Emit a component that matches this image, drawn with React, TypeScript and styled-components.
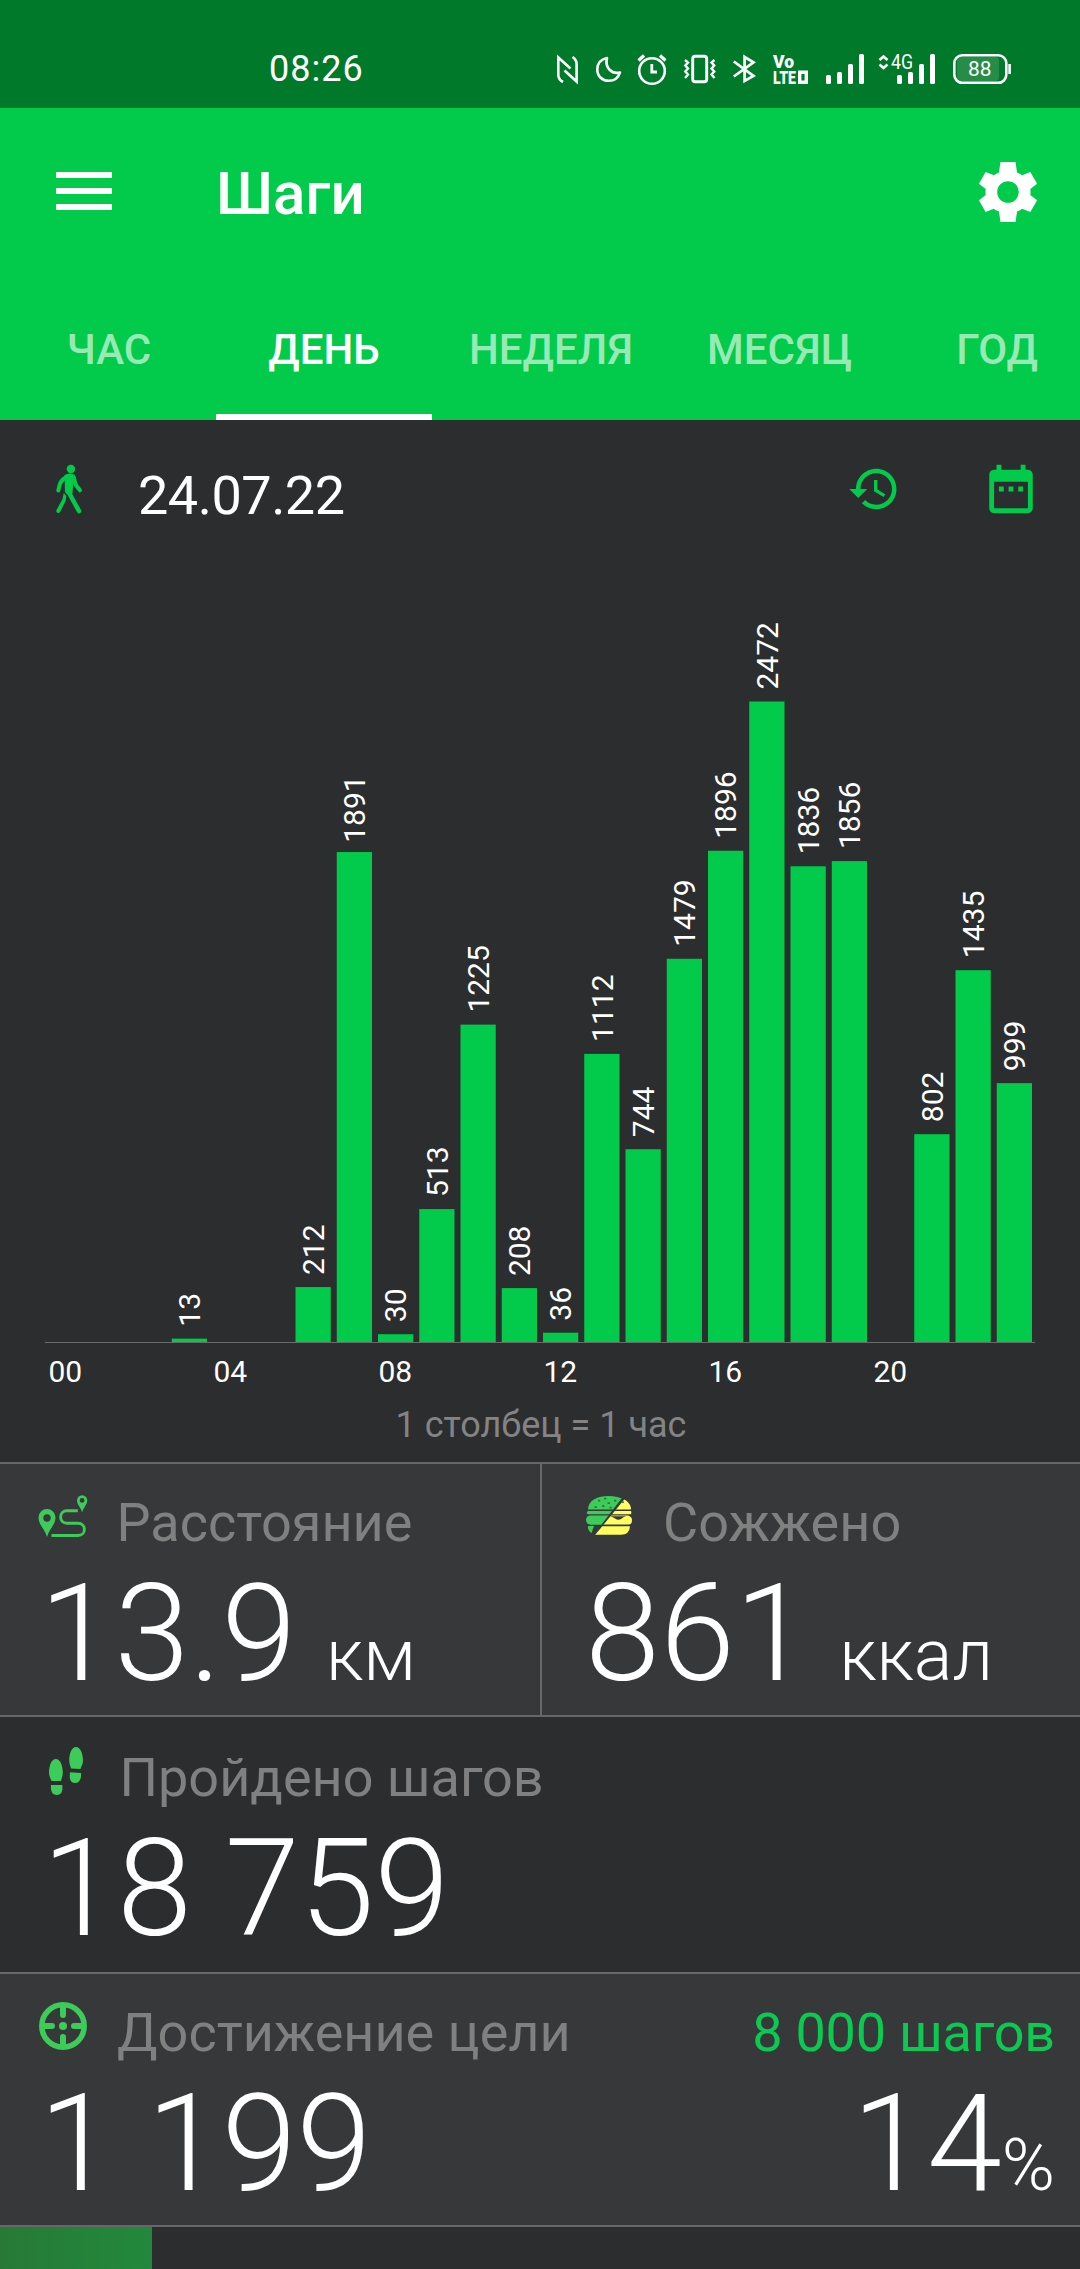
import React from "react";
import styled, { createGlobalStyle } from "styled-components";

const GREEN = "#02cb4b";
const ICON_GREEN = "#3dcb5a";
const FONT = `Roboto, "Noto Sans", "Liberation Sans", sans-serif`;

const GlobalStyle = createGlobalStyle`
  *, *::before, *::after { box-sizing: border-box; }
  html, body { margin: 0; padding: 0; background: #2b2d2e; }
  svg { display: block; flex: none; }
`;

const Screen = styled.div`
  width: 1080px;
  height: 2269px;
  overflow: hidden;
  display: flex;
  flex-direction: column;
  background: #2b2d2e;
  color: #fff;
  font-family: ${FONT};
`;

/* ---------- status bar ---------- */

const StatusBar = styled.div`
  height: 108px;
  flex: none;
  display: flex;
  background: #00792b;
  padding-left: 269px;
`;

const Clock = styled.div`
  width: 284px;
  padding-top: 48px;
  font-size: 36px;
  line-height: 42px;
  letter-spacing: 1px;
`;

const StatusIcons = styled.div`
  display: flex;
  padding-top: 50px;
`;

/* ---------- app bar ---------- */

const Header = styled.header`
  height: 312px;
  flex: none;
  background: ${GREEN};
`;

const Toolbar = styled.div`
  height: 168px;
  display: flex;
  align-items: center;
  padding: 0 36px 0 56px;
`;

const MenuButton = styled.div`
  width: 56px;
  height: 38px;
  display: flex;
  flex-direction: column;
  justify-content: space-between;
  margin-bottom: 2px;
`;

const MenuLine = styled.span`
  height: 6px;
  background: #fff;
`;

const Title = styled.h1`
  margin: 3px 0 0 104px;
  flex: 1;
  font-size: 60px;
  line-height: 70px;
  font-weight: 500;
`;

const Tabs = styled.nav`
  height: 144px;
  display: grid;
  grid-template-columns: 216px 216px 238px 219px 216px;
`;

const Tab = styled.div<{ $active?: boolean }>`
  display: flex;
  align-items: flex-start;
  justify-content: center;
  padding-top: 49px;
  font-size: 42px;
  line-height: 50px;
  font-weight: 500;
  color: ${(p) => (p.$active ? "#fff" : "rgba(255,255,255,0.6)")};
  border-bottom: 6px solid ${(p) => (p.$active ? "#fff" : "transparent")};

  &:first-child {
    padding-left: 2px;
  }
`;

/* ---------- chart ---------- */

const ChartSection = styled.section`
  height: 1042px;
  flex: none;
  display: flex;
  flex-direction: column;
`;

const DateRow = styled.div`
  height: 140px;
  display: flex;
  align-items: flex-start;
  padding: 40px 40px 0 56px;
`;

const DateText = styled.div`
  flex: 1;
  margin: 4px 0 0 53px;
  font-size: 54px;
  line-height: 64px;
  letter-spacing: -0.5px;
`;

const DateActions = styled.div`
  display: flex;
  align-items: center;
  gap: 81px;
`;

const Caption = styled.div`
  padding-top: 10px;
  padding-left: 2px;
  text-align: center;
  font-size: 36px;
  line-height: 42px;
  color: #848484;
`;

/* ---------- statistics ---------- */

const StatRow = styled.section<{ $tone: "light" | "dark"; $height: number }>`
  height: ${(p) => p.$height}px;
  flex: none;
  display: flex;
  border-top: 2px solid #666768;
  background: ${(p) => (p.$tone === "light" ? "#373839" : "#2b2d2e")};
`;

const Stat = styled.div<{ $width?: number; $left: number; $top?: number; $divided?: boolean }>`
  ${(p) => (p.$width ? `width: ${p.$width}px;` : "flex: 1;")}
  padding: ${(p) => p.$top ?? 27}px 0 0 ${(p) => p.$left}px;
  border-left: ${(p) => (p.$divided ? "2px solid #666768" : "none")};
`;

const StatHead = styled.div`
  height: 64px;
  display: flex;
  align-items: flex-start;
`;

const IconSlot = styled.div<{ $width: number; $top?: number }>`
  width: ${(p) => p.$width}px;
  flex: none;
  padding-top: ${(p) => p.$top ?? 0}px;
`;

const Label = styled.div<{ $accent?: boolean }>`
  font-size: 54px;
  line-height: 64px;
  white-space: nowrap;
  letter-spacing: ${(p) => (p.$accent ? "-0.2px" : "normal")};
  color: ${(p) => (p.$accent ? "#0cc951" : "#808080")};
`;

const Value = styled.div<{ $shift?: number }>`
  margin-left: ${(p) => p.$shift ?? 0}px;
  font-size: 135px;
  line-height: 158px;
  height: 158px;
  font-weight: 300;
  white-space: nowrap;
`;

const Unit = styled.span<{ $gap?: number }>`
  margin-left: ${(p) => p.$gap ?? 0}px;
  font-size: 72px;
  line-height: 0;
`;

const GoalSide = styled.div`
  display: flex;
  flex-direction: column;
  align-items: flex-end;
  padding: 27px 25px 0 0;
`;

const ProgressTrack = styled.div`
  flex: 1;
  border-top: 2px solid #666768;
`;

const ProgressFill = styled.div`
  height: 100%;
  background: linear-gradient(90deg, #277a36, #22883c);
`;

/* ---------- icons ---------- */

const StatusGlyphs = () => (
  <svg width="470" height="38" viewBox="553 50 470 38" fill="none" stroke="#fff">
    {/* nfc */}
    <path d="M563 82C559.5 80 558.3 78.5 558.3 75V57.5L570.5 68.5M572.5 57C575.5 59 576.6 61 576.6 64V81.5L564.5 70.5" strokeWidth="2.6" />
    {/* do not disturb */}
    <path d="M607 58C600 59.5 597.3 64 597.3 69.5C597.3 76.5 602.5 80.8 608.5 80.8C614.5 80.8 618.5 77.5 620 72.5C612 74.5 604.5 68 607 58Z" strokeWidth="2.6" strokeLinejoin="round" />
    {/* alarm */}
    <circle cx="652" cy="71" r="12.8" strokeWidth="2.6" />
    <path d="M638.5 60.5L644 55.5M665.5 60.5L660 55.5" strokeWidth="3.2" />
    <path d="M651.8 64V72H657" strokeWidth="2.8" />
    {/* vibrate */}
    <rect x="692.7" y="56.3" width="14" height="25.5" rx="2.5" strokeWidth="2.9" />
    <path d="M685 60L688 62.5L685.3 65.5L688 68.5L685.3 71.5L688 74.5L685 78M714.5 60L711.5 62.5L714.2 65.5L711.5 68.5L714.2 71.5L711.5 74.5L714.5 78" strokeWidth="2.4" />
    {/* bluetooth */}
    <path d="M733.8 61.5L753.5 75.8L744.6 81V57L753.5 62.3L733.8 76.5" strokeWidth="2.7" />
    {/* VoLTE */}
    <text fill="#fff" stroke="none" fontFamily={FONT} fontWeight="900">
      <tspan x="773" y="68.3" fontSize="18" textLength="21" lengthAdjust="spacingAndGlyphs">Vo</tspan>
      <tspan x="773" y="83.7" fontSize="19" textLength="23" lengthAdjust="spacingAndGlyphs">LTE</tspan>
    </text>
    <path d="M799.7 72.2H806.3V82.2H799.7Z" strokeWidth="3.4" />
    {/* signal strength, two SIMs */}
    <g fill="#fff" stroke="none">
      <rect x="826" y="75" width="5" height="9" rx="1.5" />
      <rect x="837" y="72" width="5" height="12" rx="1.5" />
      <rect x="848" y="64" width="5" height="20" rx="1.5" />
      <rect x="859" y="54" width="5" height="30" rx="1.5" />
      <rect x="897" y="75" width="5" height="9" rx="1.5" />
      <rect x="908" y="72" width="5" height="12" rx="1.5" />
      <rect x="919" y="64" width="5" height="20" rx="1.5" />
      <rect x="930" y="54" width="5" height="30" rx="1.5" />
      <text x="891" y="69" fontFamily={FONT} fontSize="20" textLength="22" lengthAdjust="spacingAndGlyphs">4G</text>
    </g>
    <path d="M879.5 60L883.5 56.5L887.5 60M879.5 64.5L883.5 68L887.5 64.5" strokeWidth="2.6" />
    {/* battery */}
    <rect x="957" y="57" width="42" height="24" rx="4" fill="#268c48" stroke="none" />
    <rect x="954.3" y="55.3" width="52" height="27.5" rx="8" strokeWidth="2.6" />
    <path d="M1009.6 64V74" strokeWidth="2.6" />
    <text x="968" y="76" fill="#fff" stroke="none" fontFamily={FONT} fontSize="21" textLength="23.5" lengthAdjust="spacingAndGlyphs">88</text>
  </svg>
);

const GearIcon = () => (
  <svg width="72" height="72" viewBox="0 0 24 24" fill="#fff">
    <path
      fillRule="evenodd"
      d="M19.43 12.98c.04-.32.07-.64.07-.98s-.03-.66-.07-.98l2.27-1.78-2.25-3.9-2.74 1.1c-.52-.4-1.08-.73-1.69-.98L14.5 2h-5l-.52 3.46c-.61.25-1.17.59-1.69.98l-2.74-1.1-2.25 3.9 2.27 1.78c-.04.32-.07.65-.07.98s.03.66.07.98L2.3 14.76l2.25 3.9 2.74-1.1c.52.4 1.08.73 1.69.98L9.5 22h5l.52-3.46c.61-.25 1.17-.59 1.69-.98l2.74 1.1 2.25-3.9zM12 15.6a3.6 3.6 0 1 1 0-7.2 3.6 3.6 0 0 1 0 7.2z"
    />
  </svg>
);

const WalkIcon = () => (
  <svg width="29" height="50" viewBox="0 -5 29 50" overflow="visible">
    <g stroke={GREEN} fill="none" strokeLinecap="round" strokeLinejoin="round">
      <circle cx="14.9" cy="4" r="4.2" fill={GREEN} stroke="none" />
      <path d="M9.6 12.5Q4.5 16 3.6 20L2.3 25.5" strokeWidth="4" />
      <path d="M17.7 12L19.3 18.5Q20 20.5 24 25.3" strokeWidth="4" />
      <path d="M9.3 10.5Q14 8.5 18.3 10.5L16.5 18L15.8 28H10.3Q9.3 26 9.6 22Z" fill={GREEN} strokeWidth="1.5" />
      <path d="M12.3 26.5L23 46" strokeWidth="4.6" />
      <path d="M7.8 28L10.3 31L9.8 35.5L4.3 46.5Q3.5 48.3 1.5 48Q-.2 47 .5 45L6.3 34.5Z" fill={GREEN} stroke="none" />
    </g>
  </svg>
);

const HistoryIcon = () => (
  <svg width="54" height="54" viewBox="0 0 24 24" fill={GREEN}>
    <path d="M13 3c-4.97 0-9 4.03-9 9H1l3.89 3.89.07.14L9 12H6c0-3.87 3.13-7 7-7s7 3.13 7 7-3.13 7-7 7c-1.93 0-3.68-.79-4.94-2.06l-1.42 1.42C8.27 19.99 10.51 21 13 21c4.97 0 9-4.03 9-9s-4.03-9-9-9zm-1 5v5l4.28 2.54.72-1.21-3.5-2.08V8H12z" />
  </svg>
);

const CalendarIcon = () => (
  <svg width="58" height="58" viewBox="0 0 24 24" fill={GREEN}>
    <path d="M9 11H7v2h2v-2zm4 0h-2v2h2v-2zm4 0h-2v2h2v-2zm2-7h-1V2h-2v2H8V2H6v2H5c-1.11 0-1.99.9-1.99 2L3 20c0 1.1.89 2 2 2h14c1.1 0 2-.9 2-2V6c0-1.1-.9-2-2-2zm0 16H5V9h14v11z" />
  </svg>
);

const RouteIcon = () => (
  <svg width="50" height="44" viewBox="38 1494 50 44">
    <g fill={ICON_GREEN} fillRule="evenodd">
      <path d="M47 1537C45 1529 38.5 1525 38.5 1517.5A8.5 8.5 0 0 1 55.5 1517.5C55.5 1525 49 1529 47 1537ZM47 1514.3a3.7 3.7 0 1 0 0 7.4a3.7 3.7 0 0 0 0-7.4Z" />
      <path d="M82.1 1512.5C81 1507.5 77 1505 77 1500.3A5.15 5.15 0 0 1 87.3 1500.3C87.3 1505 83.2 1507.5 82.1 1512.5ZM82.1 1498a2.4 2.4 0 1 0 0 4.8a2.4 2.4 0 0 0 0-4.8Z" />
    </g>
    <path d="M77.8 1510.8H67C58.5 1510.8 58.5 1523.3 67 1523.3H78C86.5 1523.3 86.5 1535.5 78 1535.5H51.5" fill="none" stroke={ICON_GREEN} strokeWidth="2.9" />
  </svg>
);

const BurgerIcon = () => (
  <svg width="48" height="42" viewBox="585 1495 48 42">
    <defs>
      <clipPath id="burgerLeft">
        <path d="M580 1490H628L592 1537H580Z" />
      </clipPath>
      <clipPath id="burgerRight">
        <path d="M632 1490L593 1537.5H636V1490Z" />
      </clipPath>
    </defs>
    <g clipPath="url(#burgerLeft)" fill={ICON_GREEN}>
      <path d="M588 1509.5C588 1500 598 1496 608.5 1496C619 1496 631 1500 631 1509.5Z" />
      <rect x="586.8" y="1511" width="45" height="3.2" rx="1.5" />
      <rect x="586" y="1515.5" width="46" height="9.2" rx="4.6" />
      <path d="M588 1526H594L591.5 1533Q587.5 1530.5 588 1526Z" />
    </g>
    <g clipPath="url(#burgerRight)" fill="#fffe5e">
      <path d="M588 1509.5C588 1500 598 1496 608.5 1496C619 1496 631 1500 631 1509.5Z" />
      <rect x="586.8" y="1511" width="44.5" height="3.2" rx="1" />
      <path d="M603 1515.5H628Q632 1516.5 632 1520Q632 1524.5 628.5 1524.5H595Z" />
      <path d="M590 1526.3H630Q629.5 1534.7 621 1534.7H590Z" />
    </g>
    <path d="M610 1516.2H626Q623 1516.8 621.5 1518.7Q618 1521 615.5 1518.7Q613 1517 610 1516.2Z" fill="#373839" />
    <g fill="#237a3c">
      {[[599, 1500.5], [605, 1498.5], [595.5, 1507], [603, 1506], [610.5, 1507.5], [608.5, 1503], [615, 1500.5], [622.5, 1502]].map(([x, y]) => (
        <rect key={`${x}-${y}`} x={x - 1} y={y - 0.7} width="2.3" height="1.7" />
      ))}
    </g>
  </svg>
);

const FootprintsIcon = () => (
  <svg width="36" height="50" viewBox="48 1746 36 50" fill={ICON_GREEN}>
    <path d="M55.7 1759C60.5 1759 62.8 1766 62.8 1772.5C62.8 1776 61.6 1778.5 61 1781H51.5C50.5 1778.5 49 1776 49 1772.5C49 1766 51.5 1759 55.7 1759Z" />
    <path d="M51 1785H62.3C63 1791 61.5 1795 56.7 1795C52 1795 50.5 1791 51 1785Z" />
    <path d="M76 1747C80.5 1747 83 1754 83 1760.5C83 1764 81.2 1766.5 80.5 1769L71 1768.5C70.5 1766 69.2 1764 69.2 1760.5C69.2 1754 71.5 1747 76 1747Z" />
    <path d="M70 1772.3L81 1773C81.5 1779 79.5 1783 75 1783C70.5 1783 69 1779 70 1772.3Z" />
  </svg>
);

const TargetIcon = () => (
  <svg width="48" height="48" viewBox="0 0 48 48" fill="none" stroke={ICON_GREEN}>
    <circle cx="24" cy="24" r="21.2" strokeWidth="5.5" />
    <circle cx="24" cy="24" r="4" fill={ICON_GREEN} stroke="none" />
    <path d="M24 4V13M24 35V44M4 24H13M35 24H44" strokeWidth="6" strokeLinecap="round" />
  </svg>
);

/* ---------- hourly chart ---------- */

const STEPS = [
  0, 0, 0, 13, 0, 0, 212, 1891, 30, 513, 1225, 208,
  36, 1112, 744, 1479, 1896, 2472, 1836, 1856, 0, 802, 1435, 999,
];

const AXIS_LEFT = 45;
const AXIS_Y = 782;
const SLOT = 41.25;
const BAR_WIDTH = 35.25;
const PX_PER_STEP = 0.2591;

const labelGap = (steps: number) => (steps % 10 === 1 ? 9.3 : 12);

const HourlyChart = () => (
  <svg width="1080" height="834" viewBox="0 0 1080 834" fontFamily={FONT} fontSize="30">
    {STEPS.map((steps, hour) => {
      const x = AXIS_LEFT + hour * SLOT + 3;
      const height = steps * PX_PER_STEP;
      const center = x + BAR_WIDTH / 2;
      return (
        <g key={hour}>
          {steps > 0 && (
            <>
              <rect x={x} y={AXIS_Y - height} width={BAR_WIDTH} height={height} fill={GREEN} />
              <text
                fill="#fff"
                transform={`translate(${center + 10.8} ${AXIS_Y - height - labelGap(steps)}) rotate(-90)`}
              >
                {steps}
              </text>
            </>
          )}
          {hour % 4 === 0 && (
            <text x={center - 0.3} y="822" textAnchor="middle" fill="#fff">
              {String(hour).padStart(2, "0")}
            </text>
          )}
        </g>
      );
    })}
    <rect x={AXIS_LEFT} y={AXIS_Y} width={SLOT * 24} height="1" fill="#6a6a6a" />
  </svg>
);

const TABS = ["ЧАС", "ДЕНЬ", "НЕДЕЛЯ", "МЕСЯЦ", "ГОД"];

export default function App() {
  const goalPercent = 14;
  return (
    <Screen>
      <GlobalStyle />
      <StatusBar>
        <Clock>08:26</Clock>
        <StatusIcons>
          <StatusGlyphs />
        </StatusIcons>
      </StatusBar>

      <Header>
        <Toolbar>
          <MenuButton>
            <MenuLine />
            <MenuLine />
            <MenuLine />
          </MenuButton>
          <Title>Шаги</Title>
          <GearIcon />
        </Toolbar>
        <Tabs>
          {TABS.map((tab) => (
            <Tab key={tab} $active={tab === "ДЕНЬ"}>
              {tab}
            </Tab>
          ))}
        </Tabs>
      </Header>

      <ChartSection>
        <DateRow>
          <WalkIcon />
          <DateText>24.07.22</DateText>
          <DateActions>
            <HistoryIcon />
            <CalendarIcon />
          </DateActions>
        </DateRow>
        <HourlyChart />
        <Caption>1 столбец = 1 час</Caption>
      </ChartSection>

      <StatRow $tone="light" $height={253}>
        <Stat $width={540} $left={38}>
          <StatHead>
            <IconSlot $width={78.5} $top={3}>
              <RouteIcon />
            </IconSlot>
            <Label>Расстояние</Label>
          </StatHead>
          <Value $shift={1.5}>
            13.9<Unit $gap={29.5}>км</Unit>
          </Value>
        </Stat>
        <Stat $left={43} $divided>
          <StatHead>
            <IconSlot $width={78} $top={4}>
              <BurgerIcon />
            </IconSlot>
            <Label>Сожжено</Label>
          </StatHead>
          <Value>
            861<Unit $gap={29.5}>ккал</Unit>
          </Value>
        </Stat>
      </StatRow>

      <StatRow $tone="dark" $height={257}>
        <Stat $left={48} $top={29}>
          <StatHead>
            <IconSlot $width={71.5}>
              <FootprintsIcon />
            </IconSlot>
            <Label>Пройдено шагов</Label>
          </StatHead>
          <Value $shift={-6}>18 759</Value>
        </Stat>
      </StatRow>

      <StatRow $tone="light" $height={253}>
        <Stat $left={39}>
          <StatHead>
            <IconSlot $width={78} $top={1}>
              <TargetIcon />
            </IconSlot>
            <Label>Достижение цели</Label>
          </StatHead>
          <Value>1 199</Value>
        </Stat>
        <GoalSide>
          <Label $accent>8 000 шагов</Label>
          <Value>
            {goalPercent}
            <Unit>%</Unit>
          </Value>
        </GoalSide>
      </StatRow>

      <ProgressTrack>
        <ProgressFill style={{ width: `${goalPercent}.1%` }} />
      </ProgressTrack>
    </Screen>
  );
}
